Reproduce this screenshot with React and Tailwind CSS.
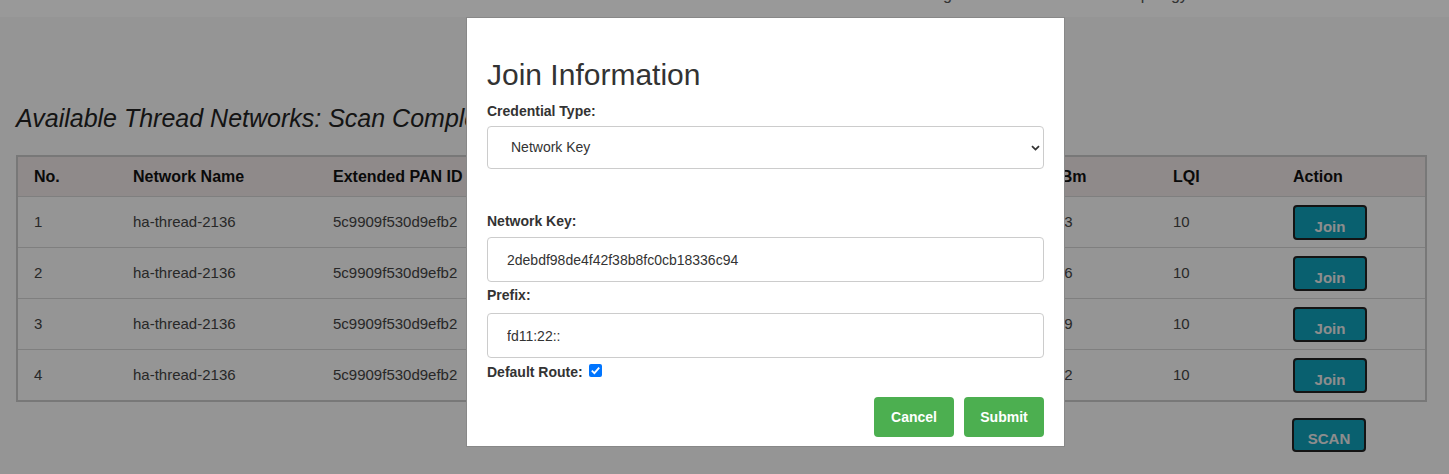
import React from 'react';

const cols = 'grid grid-cols-[99px_200px_200px_130px_258px_130px_122px_120px_148px]';

const networks = [
  { no: 1, name: 'ha-thread-2136', xpan: '5c9909f530d9efb2', pan: '0x1d26', mac: 'a2f6c6b2e1d4f3c8', ch: 15, rssi: -73, lqi: 10 },
  { no: 2, name: 'ha-thread-2136', xpan: '5c9909f530d9efb2', pan: '0x1d26', mac: 'b6e1a4c9d2f83a51', ch: 15, rssi: -76, lqi: 10 },
  { no: 3, name: 'ha-thread-2136', xpan: '5c9909f530d9efb2', pan: '0x1d26', mac: 'c3d8e2f1a6b94c27', ch: 15, rssi: -79, lqi: 10 },
  { no: 4, name: 'ha-thread-2136', xpan: '5c9909f530d9efb2', pan: '0x1d26', mac: 'd9f2b7a3c1e65e08', ch: 15, rssi: -72, lqi: 10 },
];

const headers = ['No.', 'Network Name', 'Extended PAN ID', 'PAN ID', 'Extended MAC', 'Channel', 'dBm', 'LQI', 'Action'];

const TealButton = ({ children, className }) => (
  <button
    className={`flex w-[74px] items-center justify-center rounded-[4px] border-2 border-[#222] bg-[#0fa0ba] text-[15px] font-bold text-[#ececec] ${className}`}
  >
    {children}
  </button>
);

const Label = ({ children, className }) => (
  <label className={`block text-[14px] font-bold leading-5 ${className}`}>{children}</label>
);

const JoinModal = () => (
  <div className="absolute left-[466px] top-[17px] w-[599px] border border-[#888] bg-white px-5 pb-[9px] pt-5 text-[#333]">
    <h2 className="mb-[10px] mt-5 text-[30px] font-normal leading-[33px]">Join Information</h2>

    <Label className="mb-[5px]">Credential Type:</Label>
    <div className="relative mb-[42px]">
      <select
        defaultValue="key"
        className="h-[43px] w-full appearance-none rounded-[4px] border border-[#ccc] bg-white pl-[23px] text-[14px] text-[#333] outline-none"
      >
        <option value="key">Network Key</option>
        <option value="pskc">PSKc</option>
      </select>
      <svg className="pointer-events-none absolute right-[4px] top-[19px]" width="9" height="6" viewBox="0 0 9 6">
        <path d="M1 1.2 L4.5 4.6 L8 1.2" fill="none" stroke="#333" strokeWidth="1.8" />
      </svg>
    </div>

    <Label className="mb-[6px]">Network Key:</Label>
    <input
      readOnly
      defaultValue="2debdf98de4f42f38b8fc0cb18336c94"
      className="mb-[3px] block h-[45px] w-full rounded-[4px] border border-[#ccc] px-[19px] text-[14px] text-[#333] outline-none"
    />

    <Label className="mb-[8px]">Prefix:</Label>
    <input
      readOnly
      defaultValue="fd11:22::"
      className="mb-[4px] block h-[45px] w-full rounded-[4px] border border-[#ccc] px-[19px] text-[14px] text-[#333] outline-none"
    />

    <label className="flex items-center text-[14px] font-bold leading-5">
      Default Route:
      <svg className="-mt-[3px] ml-[6px]" width="13" height="13" viewBox="0 0 13 13">
        <rect x="0" y="0" width="13" height="13" rx="2" fill="#0075ff" />
        <path d="M2.8 6.6 L5.4 9.1 L10.2 3.6" fill="none" stroke="#fff" strokeWidth="1.8" />
      </svg>
    </label>

    <div className="mt-[15px] flex justify-end gap-[10px]">
      <button className="h-[40px] w-[80px] rounded-[4px] bg-[#4caf50] text-[14px] font-bold text-white">Cancel</button>
      <button className="h-[40px] w-[80px] rounded-[4px] bg-[#4caf50] text-[14px] font-bold text-white">Submit</button>
    </div>
  </div>
);

export default function App() {
  return (
    <div className="relative h-[474px] overflow-hidden bg-[#f8f8f8] font-['Liberation_Sans',Arial,sans-serif]">
      <header className="h-[17px] overflow-hidden bg-white">
        <nav className="-mt-[17px] flex gap-[164px] pl-[902px] text-[16px] leading-6 text-[#555]">
          <span>Settings</span>
          <span>Topology</span>
        </nav>
      </header>

      <main className="px-4 pt-[86px]">
        <h3 className="text-[25px] italic leading-[30px] text-[#222]">
          Available Thread Networks: Scan Completed
        </h3>

        <div className="mt-[22px] w-[1411px] border-2 border-[#c8c8c8]">
          <div className={`${cols} h-[40px] items-center border-b border-[#d4d4d4] bg-[#eee6e6] text-[16px] font-bold text-[#111]`}>
            {headers.map((h) => (
              <div key={h} className="pl-4 whitespace-nowrap">{h}</div>
            ))}
          </div>
          {networks.map((n) => (
            <div
              key={n.no}
              className={`${cols} h-[51px] items-center border-b border-[#d4d4d4] text-[15px] text-[#444] last:h-[50px] last:border-b-0`}
            >
              <div className="pl-4">{n.no}</div>
              <div className="pl-4">{n.name}</div>
              <div className="pl-4">{n.xpan}</div>
              <div className="pl-4">{n.pan}</div>
              <div className="pl-4">{n.mac}</div>
              <div className="pl-4">{n.ch}</div>
              <div className="pl-4">{n.rssi}</div>
              <div className="pl-4">{n.lqi}</div>
              <div className="pl-4">
                <TealButton className="h-[35px] pt-[10px]">Join</TealButton>
              </div>
            </div>
          ))}
        </div>

        <div className={`${cols} mt-[16px] w-[1411px]`}>
          <div className="col-start-9 pl-[17px]">
            <TealButton className="h-[34px] pt-[8px]">SCAN</TealButton>
          </div>
        </div>
      </main>

      <div className="absolute inset-0 bg-black/40" />

      <JoinModal />
    </div>
  );
}
